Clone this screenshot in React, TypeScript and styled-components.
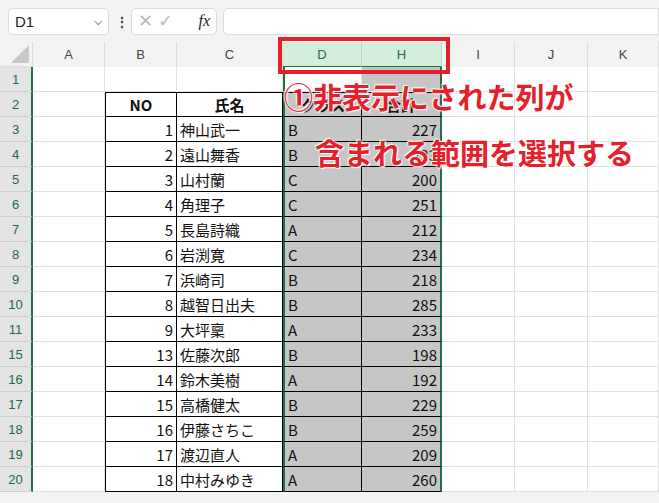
import React from "react";
import styled, { createGlobalStyle } from "styled-components";

const G = createGlobalStyle`
  body{margin:0;background:#f3f3f3;font-family:"Noto Sans CJK JP","Liberation Sans",sans-serif;overflow:hidden;}
`;
const Page = styled.div`width:659px;height:503px;position:relative;overflow:hidden;background:#f3f3f3;`;
const Bar = styled.div`height:42px;display:flex;align-items:center;gap:6px;padding:0 0 0 8px;`;
const Box = styled.div<{w?:number;grow?:boolean}>`
  height:27px;background:#fff;border:1px solid #dcdcdc;border-radius:5px;box-sizing:border-box;
  display:flex;align-items:center;padding:0 6px;${p=>p.grow?"flex:1;border-radius:5px 0 0 5px;":`width:${p.w}px;`}
  font-family:"Liberation Sans",sans-serif;font-size:15px;color:#222;justify-content:space-between;
`;
const Dots = styled.div`color:#444;font-size:14px;font-weight:bold;width:10px;text-align:center;`;
const Grid = styled.div`
  display:grid;grid-template-columns:33px 72px 72px 106px 79px 80px 73px 73px 71px;
  grid-auto-rows:25px;background:#fff;
`;
const ColH = styled.div<{sel?:boolean}>`
  height:26px;box-sizing:border-box;display:flex;align-items:center;justify-content:center;
  font-family:"Liberation Sans",sans-serif;font-size:13px;color:${p=>p.sel?"#1e6b41":"#444"};
  background:${p=>p.sel?"#d3eedb":"#f3f3f3"};border-right:1px solid ${p=>p.sel?"#b8d8c3":"#dcdcdc"};
  border-bottom:${p=>p.sel?"2px solid #1e7145":"1px solid #dcdcdc"};
`;
const RowH = styled.div`
  box-sizing:border-box;display:flex;align-items:center;justify-content:center;background:#e4e4e4;
  border-bottom:1px solid #cfcfcf;border-right:2px solid #1e7145;
  font-family:"Liberation Sans",sans-serif;font-size:13px;color:#1e6b41;
`;
const Cell = styled.div<{t?:boolean;s?:boolean;r?:boolean;b?:boolean;gl?:boolean;gr?:boolean}>`
  box-sizing:border-box;display:flex;align-items:center;padding:0 3px;overflow:hidden;white-space:nowrap;
  justify-content:${p=>p.r?"flex-end":p.b?"center":"flex-start"};
  font-size:15px;color:#111;font-weight:${p=>p.b?700:400};
  font-family:${p=>p.b||p.t?'"Noto Sans CJK JP",sans-serif':'"Liberation Sans","Noto Sans CJK JP",sans-serif'};
  background:${p=>p.s?"#c6c6c6":"#fff"};
  border-right:1px solid ${p=>p.t?"#000":"#e1e1e1"};border-bottom:1px solid ${p=>p.t?"#000":"#e1e1e1"};
  ${p=>p.gl?"border-left:2px solid #1e7145;":""}
  ${p=>p.gr?"border-right:2px solid #1e7145;":""}
`;
const Corner = styled.div`background:#f3f3f3;border-right:1px solid #dcdcdc;border-bottom:1px solid #dcdcdc;position:relative;
  &::after{content:"";position:absolute;right:3px;bottom:3px;border-left:18px solid transparent;border-bottom:18px solid #c8c8c8;}`;
const RedBox = styled.div`position:absolute;left:278px;top:37px;width:172px;height:37px;border:4px solid #e5202a;box-sizing:border-box;`;
const Note = styled.div<{x:number;y:number}>`
  position:absolute;left:${p=>p.x}px;top:${p=>p.y}px;color:#e5202a;font-weight:700;font-size:29px;
  font-family:"Noto Sans CJK JP",sans-serif;white-space:nowrap;line-height:1;
  text-shadow:0 0 2px #fff,0 0 2px #fff,1px 1px 1px #fff,-1px -1px 1px #fff;
`;
const Bottom = styled.div`height:10px;background:#f3f3f3;`;

const data:[string,string,string,string,string][]= [
 ["3","1","神山武一","B","227"],["4","2","遠山舞香","B","233"],["5","3","山村蘭","C","200"],
 ["6","4","角理子","C","251"],["7","5","長島詩織","A","212"],["8","6","岩渕寛","C","234"],
 ["9","7","浜崎司","B","218"],["10","8","越智日出夫","B","285"],["11","9","大坪稟","A","233"],
 ["15","13","佐藤次郎","B","198"],["16","14","鈴木美樹","A","192"],["17","15","高橋健太","B","229"],
 ["18","16","伊藤さちこ","B","259"],["19","17","渡辺直人","A","209"],["20","18","中村みゆき","A","260"],
];

export default function App(){
  const blank=(k:string)=>[<Cell key={k+"i"}/>,<Cell key={k+"j"}/>,<Cell key={k+"k"}/>];
  return <Page><G/>
    <Bar>
      <Box w={101}><span>D1</span><span style={{fontSize:11}}>⌵</span></Box>
      <Dots>⋮</Dots>
      <Box w={86}><span style={{color:"#bbb",fontSize:18}}>✕ ✓</span><i style={{fontFamily:"Liberation Serif,serif",fontSize:16}}>fx</i></Box>
      <Box grow/>
    </Bar>
    <Grid>
      <Corner/>
      {["A","B","C"].map(c=><ColH key={c}>{c}</ColH>)}
      <ColH sel>D</ColH><ColH sel>H</ColH>
      {["I","J","K"].map(c=><ColH key={c}>{c}</ColH>)}
      <RowH>1</RowH><Cell/><Cell/><Cell/><Cell gl/><Cell s gr/>{blank("1")}
      <RowH>2</RowH><Cell/><Cell t b style={{borderLeft:"1px solid #000",borderTop:"1px solid #000"}}>NO</Cell>
      <Cell t b style={{borderTop:"1px solid #000"}}>氏名</Cell>
      <Cell t b s gl style={{borderTop:"1px solid #000"}}>クラス</Cell><Cell t b s gr style={{borderTop:"1px solid #000"}}>合計</Cell>{blank("2")}
      {data.map(d=><React.Fragment key={d[0]}>
        <RowH>{d[0]}</RowH><Cell/>
        <Cell t r style={{borderLeft:"1px solid #000"}}>{d[1]}</Cell>
        <Cell t>{d[2]}</Cell>
        <Cell t s gl>{d[3]}</Cell><Cell t s r gr>{d[4]}</Cell>{blank(d[0])}
      </React.Fragment>)}
    </Grid>
    <Bottom/>
    <RedBox/>
    <Note x={284} y={82}>①非表示にされた列が</Note>
    <Note x={315} y={138}>含まれる範囲を選択する</Note>
  </Page>;
}
